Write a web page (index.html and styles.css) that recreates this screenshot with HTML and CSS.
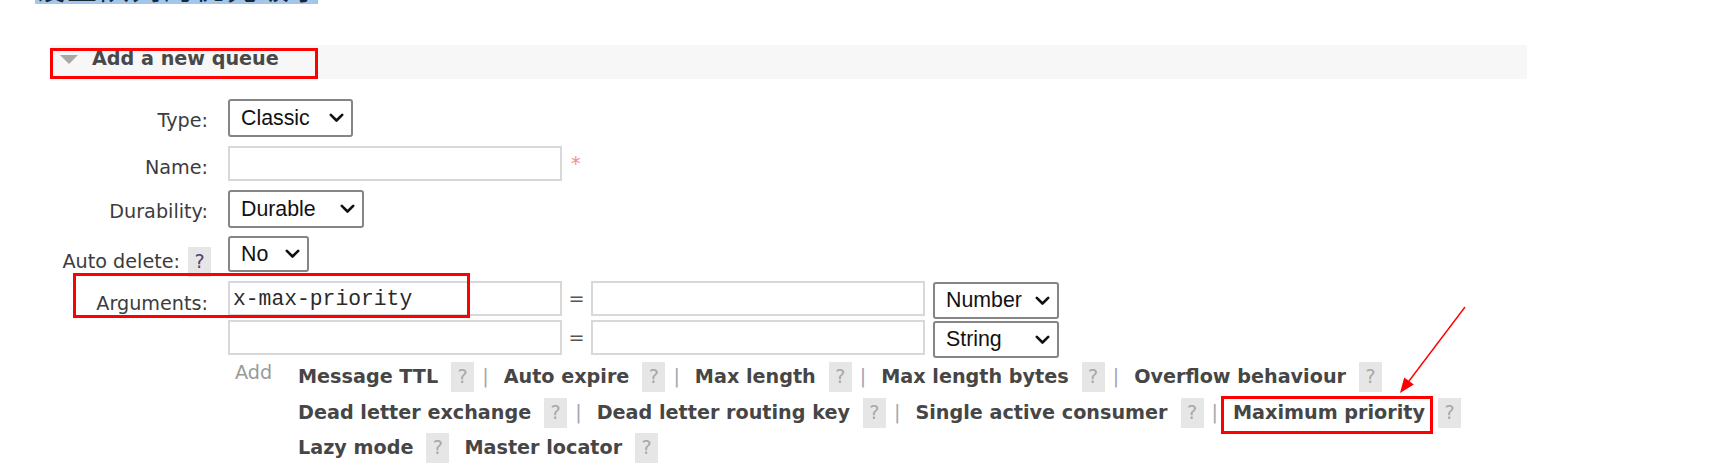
FILE: index.html
```html
<!DOCTYPE html>
<html lang="en">
<head>
<meta charset="utf-8">
<title>Add a new queue</title>
<link rel="stylesheet" href="styles.css">
</head>
<body>
<div class="selection"><span>设置队列的优先级示例代码参数</span></div>

<div class="section-head">
  <span class="tri"></span>
  <h2>Add a new queue</h2>
</div>

<div class="form">
  <div class="row row-type">
    <div class="label">Type:</div>
    <div class="ctl">
      <div class="select w-classic"><span>Classic</span><svg viewBox="0 0 15 10"><polyline points="1.8,1.8 7.5,7.5 13.2,1.8"/></svg></div>
    </div>
  </div>
  <div class="row row-name">
    <div class="label">Name:</div>
    <div class="ctl">
      <input class="text" type="text" value="">
      <span class="req">*</span>
    </div>
  </div>
  <div class="row row-dur">
    <div class="label">Durability:</div>
    <div class="ctl">
      <div class="select w-durable"><span>Durable</span><svg viewBox="0 0 15 10"><polyline points="1.8,1.8 7.5,7.5 13.2,1.8"/></svg></div>
    </div>
  </div>
  <div class="row row-auto">
    <div class="label">Auto delete:<span class="help dark">?</span></div>
    <div class="ctl">
      <div class="select w-no"><span>No</span><svg viewBox="0 0 15 10"><polyline points="1.8,1.8 7.5,7.5 13.2,1.8"/></svg></div>
    </div>
  </div>
  <div class="row row-args">
    <div class="label label-args">Arguments:</div>
    <div class="ctl args">
      <div class="arg-row">
        <input class="text" type="text" value="x-max-priority">
        <span class="eq">=</span>
        <input class="text" type="text" value="">
        <div class="select w-type"><span>Number</span><svg viewBox="0 0 15 10"><polyline points="1.8,1.8 7.5,7.5 13.2,1.8"/></svg></div>
      </div>
      <div class="arg-row">
        <input class="text" type="text" value="">
        <span class="eq">=</span>
        <input class="text" type="text" value="">
        <div class="select w-type"><span>String</span><svg viewBox="0 0 15 10"><polyline points="1.8,1.8 7.5,7.5 13.2,1.8"/></svg></div>
      </div>
    </div>
  </div>
  <div class="row-add">
    <span class="add">Add</span>
    <div class="links">
      <div class="line">
        <span class="lk">Message TTL</span><span class="help">?</span><span class="sep">|</span>
        <span class="lk">Auto expire</span><span class="help">?</span><span class="sep">|</span>
        <span class="lk">Max length</span><span class="help">?</span><span class="sep">|</span>
        <span class="lk">Max length bytes</span><span class="help">?</span><span class="sep">|</span>
        <span class="lk">Overflow behaviour</span><span class="help">?</span>
      </div>
      <div class="line">
        <span class="lk">Dead letter exchange</span><span class="help">?</span><span class="sep">|</span>
        <span class="lk">Dead letter routing key</span><span class="help">?</span><span class="sep">|</span>
        <span class="lk">Single active consumer</span><span class="help">?</span><span class="sep">|</span>
        <span class="lk">Maximum priority</span><span class="help">?</span>
      </div>
      <div class="line">
        <span class="lk">Lazy mode</span><span class="help">?</span>
        <span class="lk lk-gap">Master locator</span><span class="help">?</span>
      </div>
    </div>
  </div>
</div>

<div class="mark mark-head"></div>
<div class="mark mark-args"></div>
<div class="mark mark-prio"></div>
<svg class="arrow" viewBox="0 0 1714 464">
  <line x1="1465" y1="307" x2="1406" y2="385"/>
  <polygon points="1400,393 1404.2,377.4 1413.8,384.6"/>
</svg>
</body>
</html>
```

FILE: styles.css
```css
* { box-sizing: border-box; }
html, body { margin: 0; padding: 0; background: #fff; }
body {
  position: relative;
  width: 1714px;
  height: 464px;
  overflow: hidden;
  font-family: "DejaVu Sans", Verdana, sans-serif;
  font-size: 19.2px;
  color: #484848;
}

.selection {
  margin-left: 35px;
  width: 283px;
  height: 4px;
  background: #a3c7ea;
  overflow: hidden;
}
.selection span {
  display: block;
  margin-top: -29px;
  font-family: "Noto Sans CJK SC", sans-serif;
  font-size: 30px;
  line-height: 30px;
  letter-spacing: 2px;
  color: #1b2836;
  white-space: nowrap;
}

.section-head {
  margin: 41px 0 0 50px;
  width: 1477px;
  height: 34px;
  background: #f7f7f7;
  display: flex;
  align-items: flex-start;
  padding-left: 10px;
}
.tri {
  width: 0;
  height: 0;
  border-left: 9px solid transparent;
  border-right: 9px solid transparent;
  border-top: 9px solid #a8a8a8;
  margin-top: 10px;
}
.section-head h2 {
  margin: 3px 0 0 14px;
  font-size: 19.2px;
  line-height: 22px;
  font-weight: bold;
  color: #484848;
}

.form { margin-top: 20px; }
.row { display: flex; align-items: flex-start; }
.label {
  width: 208px;
  text-align: right;
  padding-top: 11px;
  line-height: 22px;
  white-space: nowrap;
  color: #3c3c3c;
}
.label-args { padding-top: 12px; }
.ctl { margin-left: 20px; display: flex; align-items: flex-start; }

.row-type { height: 38px; margin-bottom: 9px; }
.row-name { height: 35px; margin-bottom: 9px; }
.row-dur { height: 38px; margin-bottom: 8px; }
.row-auto { height: 36px; margin-bottom: 9px; }
.row-args { height: 78px; }

.select {
  display: flex;
  align-items: center;
  justify-content: space-between;
  height: 38px;
  border: 2px solid #858585;
  border-radius: 3px;
  padding: 0 7px 0 11px;
  font-family: "Liberation Sans", Arial, sans-serif;
  font-size: 21.33px;
  color: #111;
  background: #fff;
}
.select svg { width: 15px; height: 10px; flex: none; }
.select polyline { fill: none; stroke: #111; stroke-width: 2.6; stroke-linecap: round; stroke-linejoin: round; }
.w-classic { width: 125px; }
.w-durable { width: 136px; }
.w-no { width: 81px; height: 36px; }
.w-type { width: 126px; height: 37px; margin-left: 8px; margin-top: 1px; }

.text {
  width: 334px;
  height: 35px;
  margin: 0;
  border: 2px solid #d8d8d8;
  border-radius: 0;
  padding: 0 3px;
  font-family: "Liberation Mono", "Courier New", monospace;
  font-size: 21.33px;
  color: #2a2a2a;
  background: #fff;
  outline: none;
}
.req {
  margin-left: 9px;
  line-height: 35px;
  color: #f28b8b;
}

.args { flex-direction: column; }
.arg-row { display: flex; align-items: flex-start; height: 39px; }
.eq {
  width: 29px;
  text-align: center;
  line-height: 35px;
  color: #555;
}

.row-add { display: flex; align-items: flex-start; padding-left: 228px; }
.add {
  width: 70px;
  padding-left: 7px;
  line-height: 27px;
  color: #9a9a9a;
}
.links { line-height: 35.5px; }
.line { display: flex; align-items: baseline; white-space: nowrap; }
.lk { font-weight: bold; color: #464646; }
.lk-gap { margin-left: 15px; }
.help {
  display: inline-block;
  width: 23px;
  height: 30px;
  line-height: 30px;
  margin-left: 13px;
  text-align: center;
  background: #e6e6e6;
  color: #a8a8a8;
  font-weight: normal;
}
.help.dark { color: #4e4470; margin-left: 8px; margin-right: -3px; }
.sep { color: #a0a6b4; margin: 0 15px 0 8px; }

.mark { position: absolute; border: 3px solid #ff0000; }
.mark-head { left: 50px; top: 48px; width: 268px; height: 31px; }
.mark-args { left: 73px; top: 273px; width: 397px; height: 45px; }
.mark-prio { left: 1221px; top: 396px; width: 212px; height: 38px; }

.arrow { position: absolute; left: 0; top: 0; width: 1714px; height: 464px; pointer-events: none; }
.arrow line { stroke: #ff0000; stroke-width: 1.4; }
.arrow polygon { fill: #ff0000; }
```
